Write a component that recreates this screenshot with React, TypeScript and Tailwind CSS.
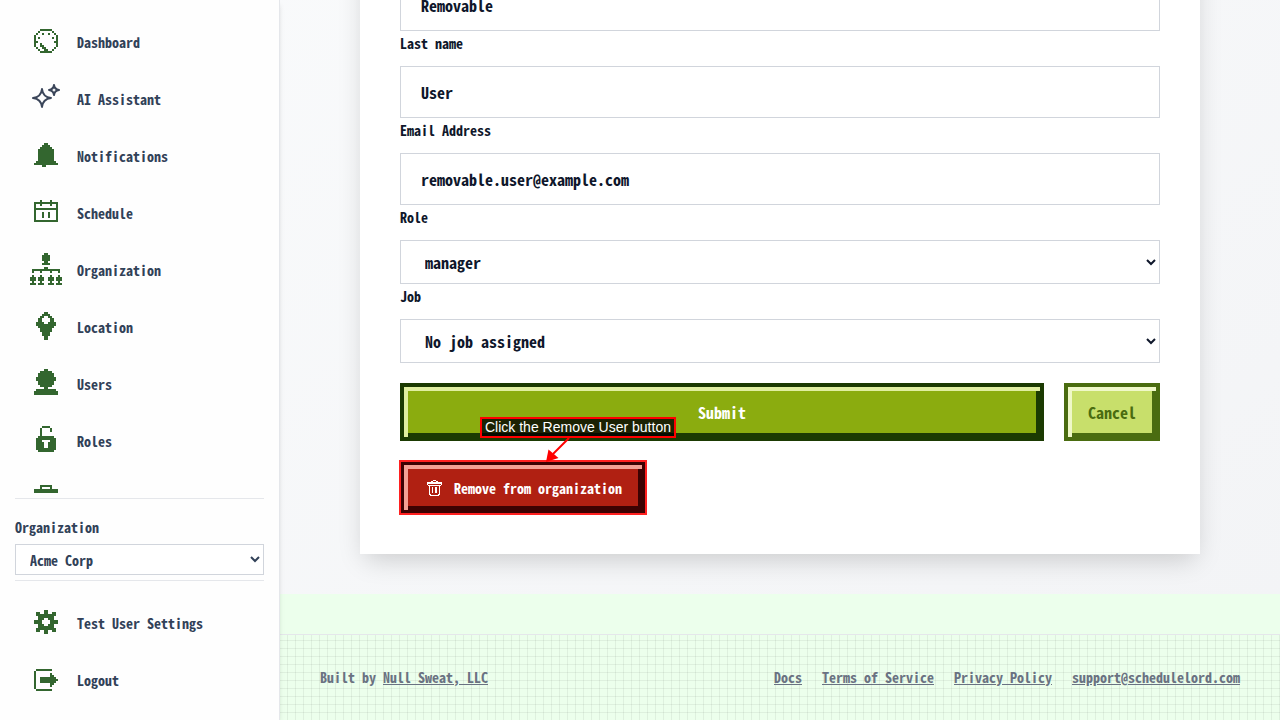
import React from 'react';

// Pixel icons: one string per row, '#' is a filled cell
const ICONS = {
  dashboard: [
    '...######...',
    '..#......#..',
    '.#..#..#..#.',
    '#..........#',
    '#.#......#.#',
    '#..........#',
    '##........##',
    '#..#.......#',
    '#..##......#',
    '.#..##....#.',
    '..#..##..#..',
    '...######...',
  ],
  bell: [
    '.....##.....',
    '....####....',
    '...######...',
    '..########..',
    '..########..',
    '..########..',
    '..########..',
    '..########..',
    '..########..',
    '.##########.',
    '############',
    '....##......',
  ],
  calendar: [
    '...#....#...',
    '############',
    '#..#....#..#',
    '#..........#',
    '############',
    '#..........#',
    '#...#..#...#',
    '#...#..#...#',
    '#...#..#...#',
    '#..........#',
    '############',
    '............',
  ],
  organization: [
    '.......##.......',
    '......####......',
    '......####......',
    '......####......',
    '.......##.......',
    '......####......',
    '................',
    '.......##.......',
    '.##############.',
    '.#...#....#...#.',
    '................',
    '.#...#....#...#.',
    '###.###..###.###',
    '###.###..###.###',
    '.#...#....#...#.',
    '###.###..###.###',
  ],
  location: [
    '....##....',
    '...####...',
    '..##..##..',
    '.##....##.',
    '.##....##.',
    '####..####',
    '##########',
    '.########.',
    '..######..',
    '..######..',
    '...####...',
    '...####...',
    '....##....',
    '....##....',
  ],
  user: [
    '.....##.....',
    '...######...',
    '..########..',
    '..########..',
    '.##########.',
    '.##########.',
    '..########..',
    '..########..',
    '...######...',
    '.....##.....',
    '.##########.',
    '############',
    '############',
    '............',
  ],
  lock: [
    '...####...',
    '..#....#..',
    '..#....#..',
    '..#.......',
    '..#.......',
    '.########.',
    '##########',
    '###....###',
    '####..####',
    '####..####',
    '####..####',
    '##########',
    '.########.',
    '..........',
  ],
  briefcase: [
    '...######...',
    '...#....#...',
    '############',
    '############',
    '############',
    '############',
    '#####..#####',
    '############',
    '############',
    '############',
    '############',
    '############',
  ],
  gear: [
    '.....##.....',
    '.##..##..##.',
    '.##########.',
    '..########..',
    '..###..###..',
    '####....####',
    '####....####',
    '..###..###..',
    '..########..',
    '.##########.',
    '.##..##..##.',
    '.....##.....',
  ],
  logout: [
    '............',
    '.########...',
    '#...........',
    '#.......#...',
    '#.......##..',
    '#..########.',
    '#..#########',
    '#..########.',
    '#.......##..',
    '#.......#...',
    '#...........',
    '.########...',
  ],
};

type IconName = keyof typeof ICONS;

const PixelIcon: React.FC<{ name: IconName }> = ({ name }) => {
  const rows = ICONS[name];
  const d = rows
    .flatMap((row, y) => [...row].map((cell, x) => (cell === '#' ? `M${x} ${y}h1v1h-1z` : '')))
    .join('');

  return (
    <svg
      width={rows[0].length * 2}
      height={rows.length * 2}
      viewBox={`0 0 ${rows[0].length} ${rows.length}`}
      fill="currentColor"
      shapeRendering="crispEdges"
      aria-hidden="true"
    >
      <path d={d} />
    </svg>
  );
};

const SparklesIcon = () => (
  <svg width="28" height="28" viewBox="0 0 28 28" fill="none" stroke="#3b465a" strokeWidth="2" strokeLinejoin="round" aria-hidden="true">
    <path d="M10 5 C10.6 10.5 13.5 13.4 19 14 C13.5 14.6 10.6 17.5 10 23 C9.4 17.5 6.5 14.6 1 14 C6.5 13.4 9.4 10.5 10 5Z" />
    <path d="M22 1 C22.4 4 24 5.6 27 6 C24 6.4 22.4 8 22 11 C21.6 8 20 6.4 17 6 C20 5.6 21.6 4 22 1Z" />
  </svg>
);

const TrashIcon = () => (
  <svg width="16" height="18" viewBox="0 0 16 18" fill="currentColor" shapeRendering="crispEdges" aria-hidden="true">
    <path d="M6 1h3v1h-3z M4 2h2v1h-2z M9 2h2v1h-2z M0 3h15v2h-15z M0 5h1v1h-1z M14 5h1v1h-1z M1 6h13v1h-13z" />
    <path d="M2 7h1v8h-1z M12 7h1v8h-1z M5 8h1v6h-1z M8 8h2v6h-2z M2 15h2v1h-2z M11 15h2v1h-2z M3 16h9v1h-9z" />
  </svg>
);

interface NavItemProps {
  label?: string;
  icon?: IconName;
}

const NavItem: React.FC<NavItemProps> = ({ label, icon }) => (
  <li className="shrink-0">
    <a href="#" className="flex h-14 items-center gap-[15px] px-[15px] text-sm text-slate-700">
      <span className="flex w-8 justify-center text-[#33662f]">
        {icon ? <PixelIcon name={icon} /> : <SparklesIcon />}
      </span>
      {label && <span className="pt-0.5">{label}</span>}
    </a>
  </li>
);

const MAIN_NAV: NavItemProps[] = [
  { label: 'Dashboard', icon: 'dashboard' },
  { label: 'AI Assistant' },
  { label: 'Notifications', icon: 'bell' },
  { label: 'Schedule', icon: 'calendar' },
  { label: 'Organization', icon: 'organization' },
  { label: 'Location', icon: 'location' },
  { label: 'Users', icon: 'user' },
  { label: 'Roles', icon: 'lock' },
  { icon: 'briefcase' },
];

const Sidebar = () => (
  <aside className="z-10 flex h-screen w-[280px] shrink-0 flex-col border-r border-gray-200 bg-[#fefefe] px-[15px] py-[13px] shadow-md">
    <nav className="min-h-0 flex-1 overflow-hidden">
      <ul className="flex flex-col gap-px">
        {MAIN_NAV.map((item, index) => (
          <NavItem key={index} {...item} />
        ))}
      </ul>
    </nav>

    {/* Organization switcher */}
    <div className="mt-[5px] border-y border-gray-200 pb-[5px] text-slate-700">
      <label htmlFor="organization" className="flex h-[45px] items-center pt-2.5 text-sm leading-5">
        Organization
      </label>
      <select id="organization" className="block h-[31px] w-full border border-gray-300 bg-white pl-2.5 text-sm">
        <option>Acme Corp</option>
      </select>
    </div>

    <ul className="flex flex-col gap-px pt-[13px]">
      <NavItem label="Test User Settings" icon="gear" />
      <NavItem label="Logout" icon="logout" />
    </ul>
  </aside>
);

interface TextFieldProps {
  id: string;
  label: string;
  value: string;
  type?: string;
}

const FieldLabel: React.FC<{ id: string; children: React.ReactNode }> = ({ id, children }) => (
  <label htmlFor={id} className="block h-[35px] pt-0.5 text-sm">
    {children}
  </label>
);

const TextField: React.FC<TextFieldProps> = ({ id, label, value, type = 'text' }) => (
  <div>
    <FieldLabel id={id}>{label}</FieldLabel>
    <input
      id={id}
      type={type}
      defaultValue={value}
      className="block h-[52px] w-full border border-gray-300 bg-white px-5 text-base"
    />
  </div>
);

const SelectField: React.FC<Omit<TextFieldProps, 'type'>> = ({ id, label, value }) => (
  <div>
    <FieldLabel id={id}>{label}</FieldLabel>
    <select id={id} className="block h-11 w-full border border-gray-300 bg-white pl-5 text-base">
      <option>{value}</option>
    </select>
  </div>
);

const Callout = () => (
  <div className="absolute -top-11 left-20 font-['Liberation_Sans',Arial,sans-serif] font-normal">
    <p className="border-2 border-[#ff0000] bg-black/80 px-[3px] text-sm leading-[17px] whitespace-nowrap text-white">
      Click the Remove User button
    </p>
    <svg className="absolute top-5 left-16" width="30" height="26" viewBox="0 0 30 26" aria-hidden="true">
      <path d="M25 1 L9 17" stroke="#ff0000" strokeWidth="2" />
      <path d="M2 25 L4.5 12.5 L14.5 21Z" fill="#ff0000" />
    </svg>
  </div>
);

const FOOTER_LINKS = ['Docs', 'Terms of Service', 'Privacy Policy', 'support@schedulelord.com'];

const Footer = () => (
  <footer className="mt-10 flex shrink-0 items-center justify-between border-t border-gray-200 bg-[linear-gradient(to_right,transparent_7px,rgba(0,0,0,0.06)_7px),linear-gradient(to_bottom,transparent_7px,rgba(0,0,0,0.06)_7px)] bg-[size:8px_8px] bg-[position:0_-2px] px-10 py-8 text-sm leading-[21px] text-gray-500">
    <p>
      Built by <a href="#" className="underline">Null Sweat, LLC</a>
    </p>
    <div className="flex gap-5">
      {FOOTER_LINKS.map((link) => (
        <a key={link} href="#" className="underline">{link}</a>
      ))}
    </div>
  </footer>
);

const App: React.FC = () => {
  return (
    <div className="flex h-screen overflow-hidden bg-[#ecffec] font-['Noto_Sans_Mono_CJK_JP','Liberation_Mono',monospace] font-bold">
      <Sidebar />

      <div className="flex min-w-0 flex-1 flex-col justify-end">
        <main className="shrink-0 bg-linear-to-br from-gray-50 to-gray-100 px-20 pb-10">
          <form className="mx-auto max-w-[840px] bg-white p-10 text-slate-900 shadow-[0_10px_25px_-5px_rgba(0,0,0,0.18)]">
            <TextField id="first-name" label="First name" value="Removable" />
            <TextField id="last-name" label="Last name" value="User" />
            <TextField id="email" label="Email Address" value="removable.user@example.com" type="email" />
            <SelectField id="role" label="Role" value="manager" />
            <SelectField id="job" label="Job" value="No job assigned" />

            {/* Form actions */}
            <div className="mt-5 flex gap-5">
              <button
                type="button"
                className="h-[58px] flex-1 border-4 border-[#1b3a02] bg-[#8bac0f] text-base text-white shadow-[inset_4px_4px_0_#e0eea0,inset_-4px_-4px_0_#1b3a02]"
              >
                Submit
              </button>
              <button
                type="button"
                className="h-[58px] border-4 border-[#4a6c10] bg-[#c8df6b] px-5 text-base text-[#4a6c10] shadow-[inset_4px_4px_0_#eff8c8,inset_-4px_-4px_0_#4a6c10]"
              >
                Cancel
              </button>
            </div>

            <div className="relative mt-5 w-fit">
              <button
                type="button"
                className="flex h-[53px] items-center gap-[11px] border-4 border-[#3c0202] bg-[#b02012] pr-5 pl-[23px] text-sm text-white shadow-[inset_4px_4px_0_#f3a094,inset_-4px_-4px_0_#3c0202] outline-2 -outline-offset-1 outline-[#ff2020]"
              >
                <TrashIcon />
                Remove from organization
              </button>
              <Callout />
            </div>
          </form>
        </main>
        <Footer />
      </div>
    </div>
  );
};

export default App;
